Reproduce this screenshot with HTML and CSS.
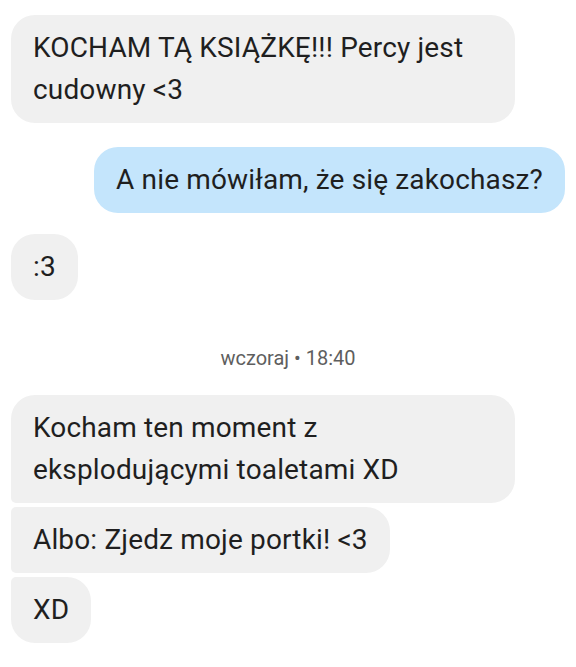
FILE: index.html
```html
<!DOCTYPE html>
<html lang="pl">
<head>
<meta charset="utf-8">
<link rel="stylesheet" href="styles.css">
</head>
<body>
<div class="thread">
  <div class="msg in gap-after-lg">KOCHAM TĄ KSIĄŻKĘ!!! Percy jest cudowny &lt;3</div>
  <div class="msg out gap-after-md">A nie mówiłam, że się zakochasz?</div>
  <div class="msg in">:3</div>
  <div class="stamp">wczoraj • 18:40</div>
  <div class="msg in first">Kocham ten moment z eksplodującymi toaletami XD</div>
  <div class="msg in middle">Albo: Zjedz moje portki! &lt;3</div>
  <div class="msg in last">XD</div>
</div>
</body>
</html>
```

FILE: styles.css
```css
* { box-sizing: border-box; }
html, body {
  margin: 0;
  padding: 0;
  background: #ffffff;
}
body {
  font-family: Roboto, "Noto Sans", sans-serif;
  color: #1f1f1f;
}
.thread {
  display: flex;
  flex-direction: column;
  align-items: flex-start;
  padding: 15px 11px;
}
.msg {
  max-width: 504px;
  padding: 12px 22px;
  font-size: 28px;
  line-height: 42px;
  letter-spacing: 0.15px;
  border-radius: 24px;
  background: #f0f0f0;
}
.msg.out {
  align-self: flex-end;
  background: #c4e5fc;
}
.gap-after-lg { margin-bottom: 24px; }
.gap-after-md { margin-bottom: 21px; }
.msg.first { border-bottom-left-radius: 5px; margin-bottom: 4px; }
.msg.middle { border-top-left-radius: 5px; border-bottom-left-radius: 5px; margin-bottom: 4px; }
.msg.last { border-top-left-radius: 5px; }
.stamp {
  align-self: center;
  margin: 46px 0 24px;
  font-size: 20px;
  line-height: 25px;
  color: #5e5e5e;
}
```
